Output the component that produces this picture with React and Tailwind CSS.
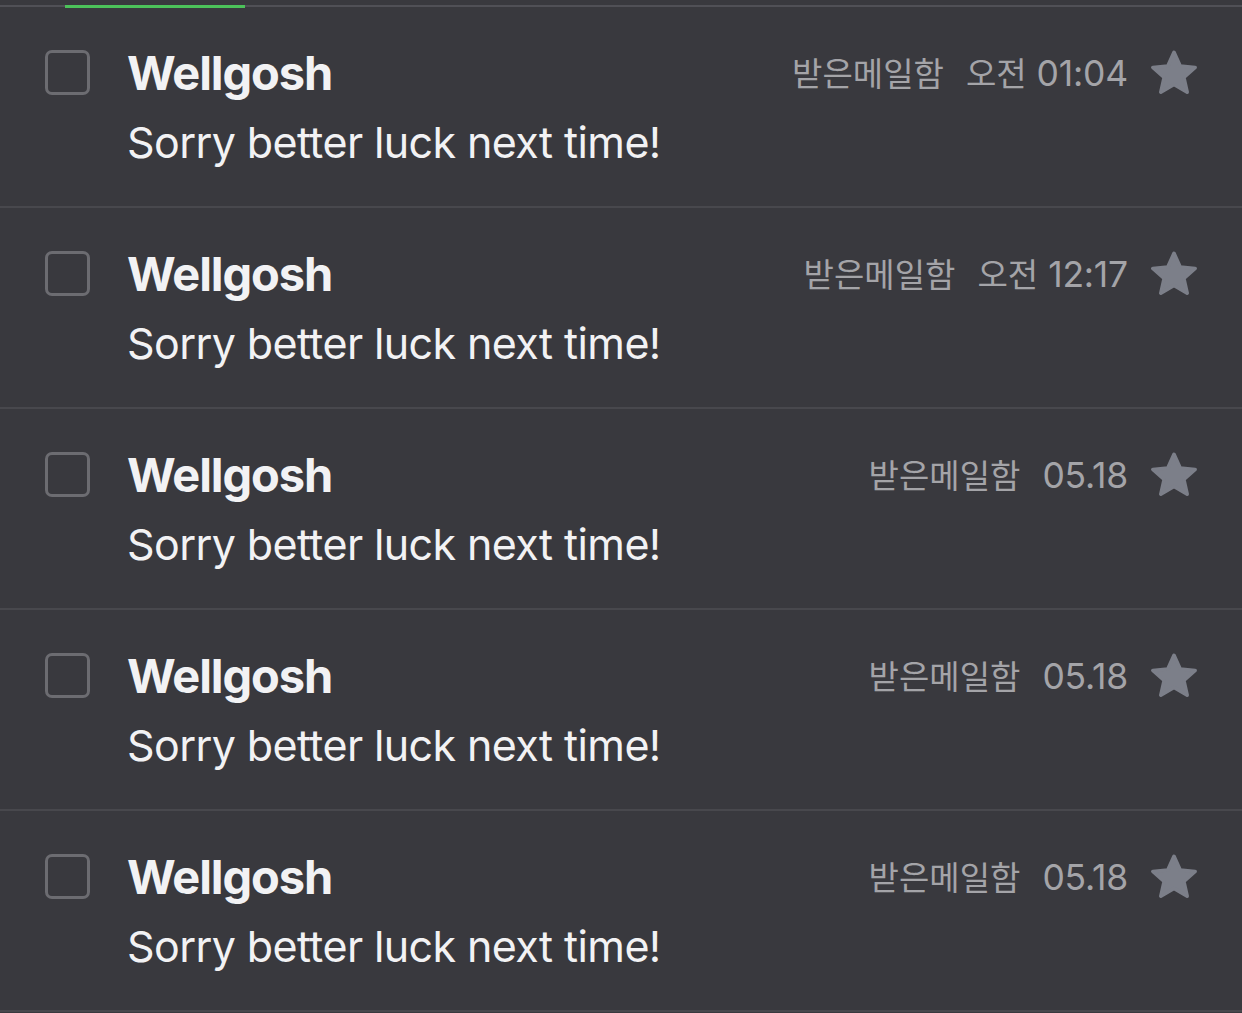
import React from "react";

const rows = [
  { time: "오전 01:04" },
  { time: "오전 12:17" },
  { time: "05.18" },
  { time: "05.18" },
  { time: "05.18" },
];

function Star() {
  return (
    <svg width="54" height="54" viewBox="0 0 24 24" className="block">
      <path
        d="M12 2.8l2.75 6.1 6.65.62-5.02 4.45 1.48 6.53L12 17.1l-5.86 3.4 1.48-6.53L2.6 9.52l6.65-.62z"
        fill="#7c7f89"
        stroke="#7c7f89"
        strokeWidth="1.6"
        strokeLinejoin="round"
      />
    </svg>
  );
}

function parseTime(t) {
  if (t.startsWith("오전 ")) return ["오전", t.slice(3)];
  return [null, t];
}

const kr = { fontFamily: '"Noto Sans CJK KR", sans-serif' };

function Row({ time }) {
  const [ampm, clock] = parseTime(time);
  return (
    <div className="flex h-[201px] border-b-2 border-[#48484d] pl-[45px] pr-[41px]">
      <div className="mt-[43px] h-[45px] w-[45px] shrink-0 rounded-[7px] border-[3px] border-[#6c6c71]" />
      <div className="ml-[37px] flex min-w-0 flex-1 flex-col">
        <div className="flex items-start">
          <div className="mt-[37px] text-[47px] font-bold leading-[58px] tracking-[-1.1px] text-[#f2f2f4]">
            Wellgosh
          </div>
          <div className="flex-1" />
          <div className="mt-[45px] flex items-baseline text-[35.5px] leading-[40px] tracking-[-0.2px] text-[#a4a4a8]">
            <span style={kr} className="text-[33px] tracking-[0px]">
              받은메일함
            </span>
            <span className="ml-[22px] flex items-baseline">
              {ampm && (
                <span style={kr} className="mr-[10px] text-[33px] tracking-[0px]">
                  {ampm}
                </span>
              )}
              <span>{clock}</span>
            </span>
          </div>
          <div className="ml-[19px] mt-[39px] shrink-0">
            <Star />
          </div>
        </div>
        <div className="mt-[14px] text-[43px] leading-[53px] tracking-[-0.6px] text-[#f2f2f4]">
          Sorry better luck next time!
        </div>
      </div>
    </div>
  );
}

export default function App() {
  return (
    <div
      className="min-h-[1013px] w-full bg-[#39393e]"
      style={{ fontFamily: 'Inter, "Noto Sans CJK KR", sans-serif' }}
    >
      <div className="h-[5px]" />
      <div className="flex h-[2px] bg-[#505056]">
        <div className="ml-[65px] h-[3px] w-[180px] bg-[#4cc25a]" />
      </div>
      {rows.map((r, i) => (
        <Row key={i} time={r.time} />
      ))}
    </div>
  );
}
